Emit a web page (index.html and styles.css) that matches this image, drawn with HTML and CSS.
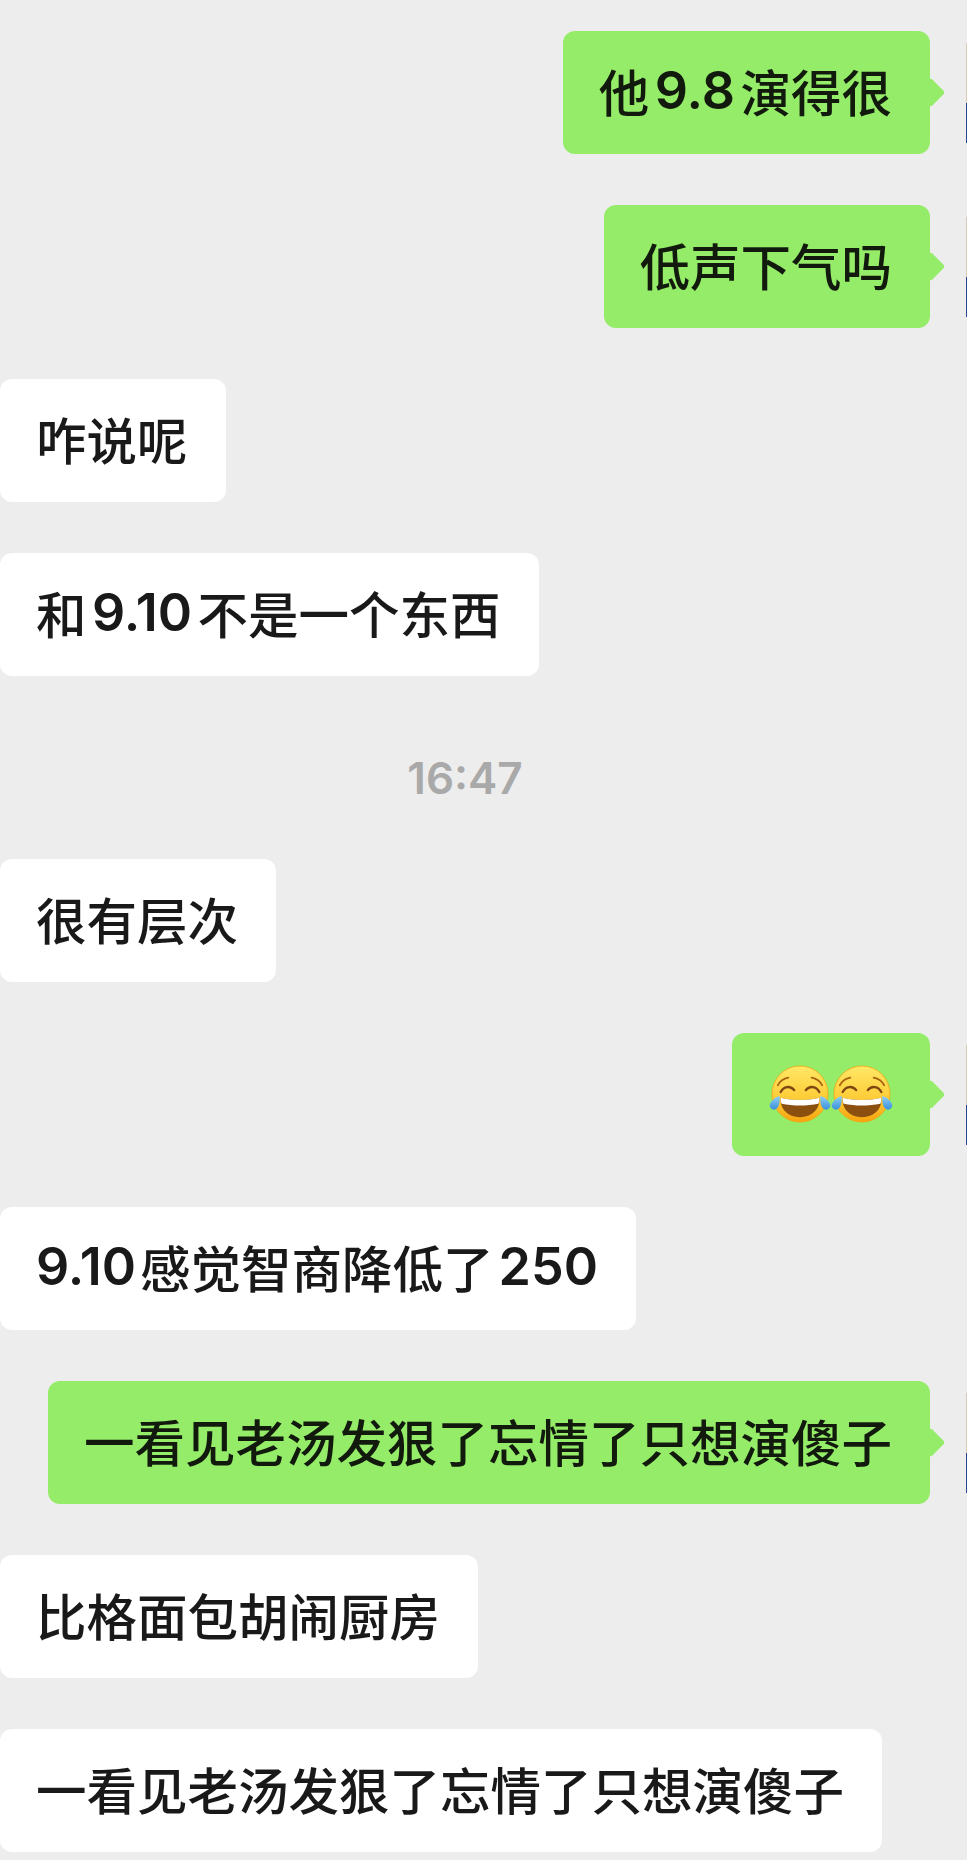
FILE: index.html
```html
<!DOCTYPE html>
<html lang="zh-CN">
<head>
  <meta charset="UTF-8">
  <meta name="viewport" content="width=device-width, initial-scale=1.0">
  <title>聊天记录</title>
  <link rel="stylesheet" href="styles.css">
</head>
<body>
  <div class="chat">
    <div class="row mine">
      <div class="bubble">他<span class="num">9.8</span>演得很</div>
      <div class="avatar"></div>
    </div>
    <div class="row mine">
      <div class="bubble">低声下气吗</div>
      <div class="avatar"></div>
    </div>
    <div class="row">
      <div class="bubble">咋说呢</div>
    </div>
    <div class="row">
      <div class="bubble">和<span class="num wide">9.10</span>不是一个东西</div>
    </div>
    <div class="time">16:47</div>
    <div class="row">
      <div class="bubble">很有层次</div>
    </div>
    <div class="row mine">
      <div class="bubble emoji-bubble">
        <svg class="emoji" viewBox="0 0 64 60" role="img" aria-label="😂"><use href="#joy"></use></svg>
        <svg class="emoji" viewBox="0 0 64 60" role="img" aria-label="😂"><use href="#joy"></use></svg>
      </div>
      <div class="avatar"></div>
    </div>
    <div class="row">
      <div class="bubble"><span class="num wide first">9.10</span>感觉智商降低了<span class="num last">250</span></div>
    </div>
    <div class="row mine">
      <div class="bubble">一看见老汤发狠了忘情了只想演傻子</div>
      <div class="avatar"></div>
    </div>
    <div class="row">
      <div class="bubble">比格面包胡闹厨房</div>
    </div>
    <div class="row">
      <div class="bubble">一看见老汤发狠了忘情了只想演傻子</div>
    </div>
  </div>

  <!-- laughing face, used twice -->
  <svg class="defs" width="0" height="0">
    <defs>
      <linearGradient id="face" x1="0" y1="0" x2="0" y2="1">
        <stop offset="0" stop-color="#ffe867"/>
        <stop offset="0.6" stop-color="#fdcb35"/>
        <stop offset="1" stop-color="#f7a30f"/>
      </linearGradient>
      <linearGradient id="tear" x1="0" y1="0" x2="0" y2="1">
        <stop offset="0" stop-color="#8fd0f5"/>
        <stop offset="1" stop-color="#3a8fdc"/>
      </linearGradient>
      <g id="joy">
        <circle cx="32" cy="30" r="29" fill="url(#face)" stroke="#f2a20c" stroke-width="0.8"/>
        <path d="M12 28c3-6 10-7 14-2M52 28c-3-6-10-7-14-2" fill="none" stroke="#7d4510" stroke-width="2.4" stroke-linecap="round"/>
        <path d="M9 21c2-4 6-7 11-8M55 21c-2-4-6-7-11-8" fill="none" stroke="#a8640f" stroke-width="1.8" stroke-linecap="round"/>
        <path d="M12 34c12 3 28 3 40 0 1 12-8 20-20 20S11 46 12 34z" fill="#8b4f10"/>
        <path d="M12 34c12 3 28 3 40 0 0 2.500 0 4-1 6-12 2.500-26 2.500-38 0-1-2-1-3.500-1-6z" fill="#fff"/>
        <path d="M11 32c0 4 0 7-1 10-1 3-4 5-6 4-3-1-4-4-3-6 2-4 6-7 10-8z" fill="url(#tear)"/>
        <path d="M53 32c0 4 0 7 1 10 1 3 4 5 6 4 3-1 4-4 3-6-2-4-6-7-10-8z" fill="url(#tear)"/>
      </g>
    </defs>
  </svg>
</body>
</html>
```

FILE: styles.css
```css
body {
  margin: 0;
  background-color: #ededed;
  font-family: Inter, "Noto Sans CJK SC", sans-serif;
  overflow-x: hidden;
}

.chat {
  display: flex;
  flex-direction: column;
  gap: 51px;
  padding-top: 31px;
  padding-bottom: 9px;
}

.row {
  display: flex;
  align-items: center;
}

.mine {
  justify-content: flex-end;
}

.bubble {
  position: relative;
  display: flex;
  align-items: center;
  height: 123px;
  box-sizing: border-box;
  padding: 0 38px 5px 36px;
  border-radius: 12px;
  background-color: #fff;
  color: #191919;
  font-size: 50.5px;
  font-weight: 500;
  white-space: nowrap;
}

.mine .bubble {
  background-color: #95ec69;
  color: #111a0c;
}

.mine .emoji-bubble {
  padding: 0 37px 2px;
}

/* little tail pointing at the avatar */
.mine .bubble::after {
  content: "";
  position: absolute;
  top: 50%;
  right: -11px;
  width: 21px;
  height: 21px;
  margin-top: -11px;
  border-radius: 3px;
  background-color: #95ec69;
  transform: rotate(45deg);
}

.num {
  margin: 0 5.5px;
  font-size: 52px;
  font-weight: 600;
}

.num.first {
  margin-left: 0;
  margin-right: 4px;
}

.num.last {
  margin-right: 0;
  margin-left: 5px;
}

.avatar {
  width: 1px;
  height: 100px;
  margin-left: 36px;
  background: linear-gradient(#d9cbb8 0 60%, #24478f 60% 100%);
}

.time {
  margin: 29px 37px 8px 0;
  height: 44px;
  line-height: 44px;
  text-align: center;
  color: #a9a9a9;
  font-size: 44px;
  font-weight: 600;
}

.emoji {
  display: block;
  width: 62px;
  height: 58px;
}

.defs {
  position: absolute;
}
```
